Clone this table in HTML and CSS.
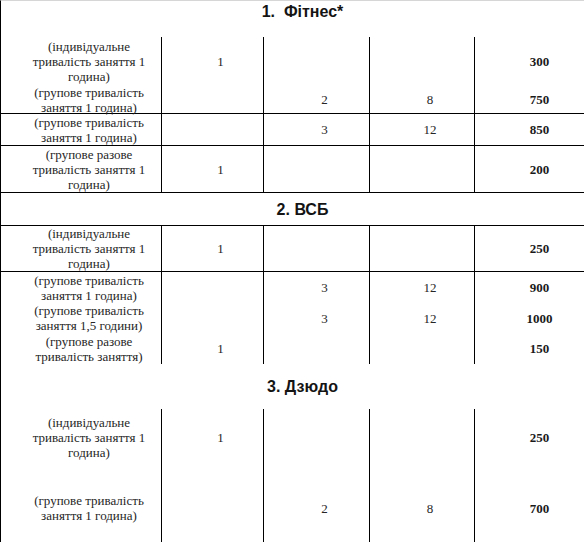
FILE: index.html
```html
<!DOCTYPE html>
<html lang="uk">
<head>
<meta charset="utf-8">
<title>Прайс</title>
<link rel="stylesheet" href="styles.css">
</head>
<body>
<div class="sheet">
  <div class="cell title t1">1.&nbsp; Фітнес*</div>

  <div class="cell r1a">(індивідуальне<br>тривалість заняття 1<br>година)</div>
  <div class="cell r1a">1</div>
  <div class="cell r1a"></div>
  <div class="cell r1a"></div>
  <div class="cell r1a num">300</div>

  <div class="cell r1b sep">(групове тривалість<br>заняття 1 година)</div>
  <div class="cell sep"></div>
  <div class="cell sep">2</div>
  <div class="cell sep">8</div>
  <div class="cell sep num">750</div>

  <div class="cell sep">(групове тривалість<br>заняття 1 година)</div>
  <div class="cell sep"></div>
  <div class="cell sep">3</div>
  <div class="cell sep">12</div>
  <div class="cell sep num">850</div>

  <div class="cell sep">(групове разове<br>тривалість заняття 1<br>година)</div>
  <div class="cell sep">1</div>
  <div class="cell sep"></div>
  <div class="cell sep"></div>
  <div class="cell sep num">200</div>

  <div class="cell title sep">2. ВСБ</div>

  <div class="cell sep">(індивідуальне<br>тривалість заняття 1<br>година)</div>
  <div class="cell sep">1</div>
  <div class="cell sep"></div>
  <div class="cell sep"></div>
  <div class="cell sep num">250</div>

  <div class="cell">(групове тривалість<br>заняття 1 година)</div>
  <div class="cell"></div>
  <div class="cell">3</div>
  <div class="cell">12</div>
  <div class="cell num">900</div>

  <div class="cell">(групове тривалість<br>заняття 1,5 години)</div>
  <div class="cell"></div>
  <div class="cell">3</div>
  <div class="cell">12</div>
  <div class="cell num">1000</div>

  <div class="cell">(групове разове<br>тривалість заняття)</div>
  <div class="cell">1</div>
  <div class="cell"></div>
  <div class="cell"></div>
  <div class="cell num">150</div>

  <div class="cell title">3. Дзюдо</div>

  <div class="cell">(індивідуальне<br>тривалість заняття 1<br>година)</div>
  <div class="cell">1</div>
  <div class="cell"></div>
  <div class="cell"></div>
  <div class="cell num">250</div>

  <div class="cell">(групове тривалість<br>заняття 1 година)</div>
  <div class="cell"></div>
  <div class="cell">2</div>
  <div class="cell">8</div>
  <div class="cell num">700</div>
</div>
</body>
</html>
```

FILE: styles.css
```css
html, body {
  margin: 0;
  padding: 0;
  background: #fff;
  overflow: hidden;
}

.sheet {
  display: grid;
  width: 588px;
  grid-template-columns: 161px 102px 106px 105px 114px;
  grid-template-rows: 37px 48px 29px 32px 47px 33px 46px 31px 30px 31px 45px 56px 86px;
  font-family: "Liberation Serif", "Times New Roman", serif;
  font-size: 13px;
  line-height: 15px;
  color: #262626;
}

.cell {
  box-sizing: border-box;
  border-left: 1px solid #000;
  padding-left: 16px;
  display: flex;
  align-items: center;
  justify-content: center;
  text-align: center;
  white-space: nowrap;
  min-height: 0;
}

.sep {
  border-bottom: 1px solid #000;
}

.num {
  font-weight: bold;
  color: #1a1a1a;
}

.r1b {
  padding-top: 2px;
}

.title {
  grid-column: 1 / -1;
  font-family: "Liberation Sans", Arial, sans-serif;
  font-weight: bold;
  font-size: 16px;
  color: #141414;
}

.t1 {
  border-top: 1px solid #d6d6d6;
  align-items: flex-start;
  padding-top: 3px;
}
```
